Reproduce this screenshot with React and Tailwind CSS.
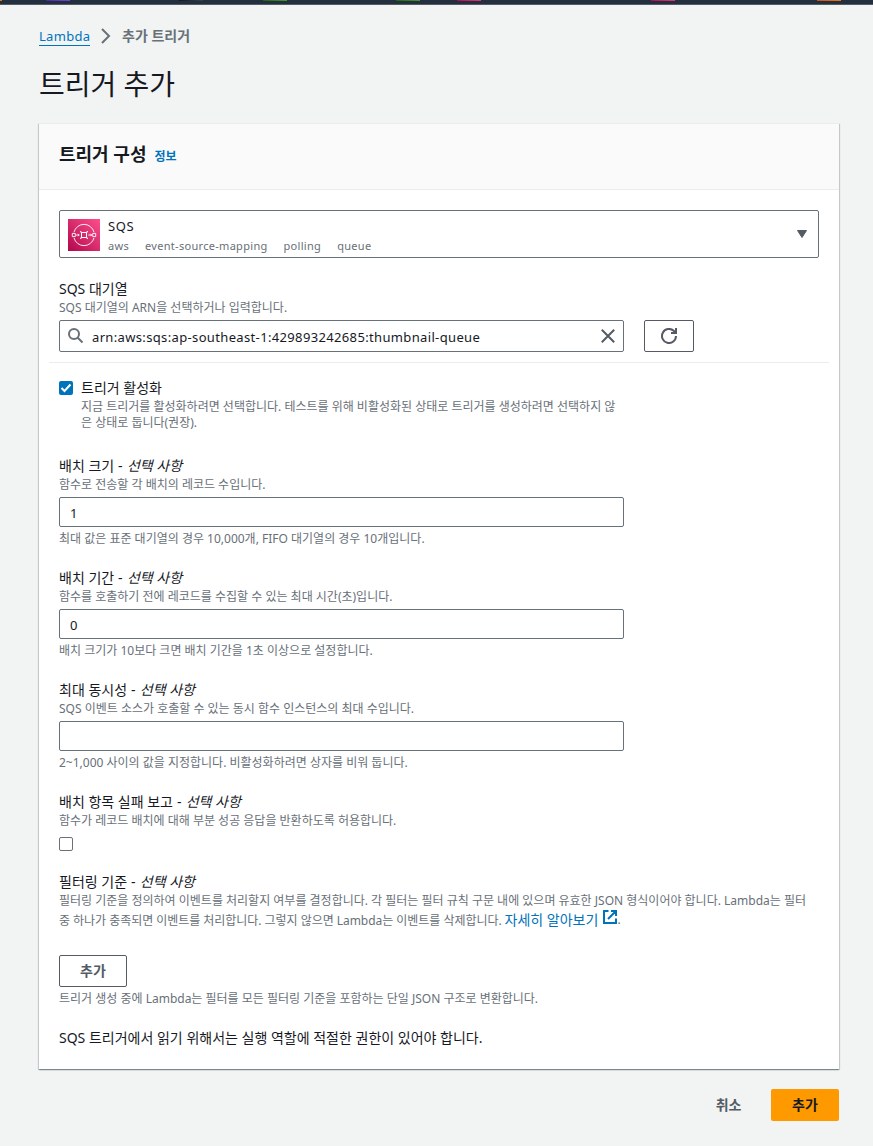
import React from "react";

function Label({ children, optional }) {
  return (
    <div className="h-[21px] whitespace-nowrap text-[14px] leading-[21px] text-[#16191f]">
      {children}
      {optional && (
        <>
          <span className="tracking-[0.3px]">{" - "}</span>
          <i>선택 사항</i>
        </>
      )}
    </div>
  );
}

function Hint({ children }) {
  return <div className="h-4 whitespace-nowrap text-[12px] leading-4 text-[#687078]">{children}</div>;
}

function Field({ label, desc, value, hint }) {
  return (
    <div className="mb-5 w-[565px]">
      <Label optional>{label}</Label>
      <div className="pt-px">
        <Hint>{desc}</Hint>
      </div>
      <div className="mt-[4px] mb-[4px] flex h-[30px] items-center rounded-[2px] border border-[#687078] px-[10px] pt-[4px] text-[13px] text-[#16191f]">
        {value}
      </div>
      <Hint>{hint}</Hint>
    </div>
  );
}

function SqsIcon() {
  return (
    <svg width="32" height="32" viewBox="0 0 32 32" fill="none" stroke="#fff">
      <defs>
        <linearGradient id="sqs" x1="0" y1="32" x2="32" y2="0" gradientUnits="userSpaceOnUse">
          <stop stopColor="#b0084d" />
          <stop offset="1" stopColor="#ff4f8b" />
        </linearGradient>
      </defs>
      <path d="M0 0h32v32H0z" fill="url(#sqs)" stroke="none" />
      <path d="M6 13.2a10.3 10.3 0 0 1 20 0M6 18.8a10.3 10.3 0 0 0 20 0" strokeWidth=".9" />
      <path d="M4.3 14.4h3v3.2h-3zM24.7 14.4h3v3.2h-3z" strokeWidth=".9" />
      <path d="M13.5 13.5h5v5h-5zM12 12.500l1.500 1M12.500 12l1 1.500M20 12.500l-1.500 1M19.500 12l-1 1.500M12 19.500l1.500-1M12.500 20l1-1.500M20 19.500l-1.500-1M19.500 20l-1-1.500" strokeWidth="1" />
      <path d="M8 16h3.200M20.300 16h3.400M10 14.800l1.200 1.200-1.200 1.200M22.500 14.800l1.200 1.200-1.200 1.200" strokeWidth=".9" />
    </svg>
  );
}

export default function App() {
  return (
    <div className="flex h-[1146px] w-[873px] flex-col overflow-hidden bg-[#f2f3f3] font-['Noto_Sans','Noto_Sans_CJK_KR',sans-serif] text-[#16191f]">
      <div className="flex h-[5px] shrink-0 border-b border-[#545b64] bg-[#232f3e]">
        <div className="h-px w-[2px] bg-[#ec7211]" />
        <div className="ml-[44px] h-px w-6 bg-linear-to-r from-[#4d27a8] to-[#7545d5]" />
        <div className="ml-[109px] h-px w-6 bg-linear-to-r from-[#17191f] to-[#3b4048]" />
        <div className="ml-[60px] h-px w-6 bg-linear-to-r from-[#1b660f] to-[#4a952c]" />
        <div className="ml-[109px] h-px w-6 bg-linear-to-r from-[#1b660f] to-[#4a952c]" />
        <div className="ml-[37px] h-px w-6 bg-linear-to-r from-[#b0084d] to-[#d93a74]" />
        <div className="ml-[170px] h-px w-6 bg-linear-to-r from-[#b0084d] to-[#d93a74]" />
        <div className="ml-[142px] h-px w-6 bg-linear-to-r from-[#c8511b] to-[#e8780f]" />
      </div>

      <nav className="mt-[21px] ml-[39px] flex h-[20px] shrink-0 items-center text-[14px] leading-[20px]">
        <a className="h-[20px] w-[51px] whitespace-nowrap border-b border-[#0073bb] text-[13px] leading-[20px] tracking-[0.3px] text-[#0073bb]">Lambda</a>
        <svg className="ml-[10px] mr-[10px]" width="12" height="18" viewBox="0 0 12 18" fill="none" stroke="#687078" strokeWidth="2">
          <path d="M2 2l7 7-7 7" />
        </svg>
        <span className="font-bold text-[#687078]">추가 트리거</span>
      </nav>

      <h1 className="mt-[20px] ml-[39px] h-[36px] shrink-0 text-[28px] leading-[36px]">트리거 추가</h1>

      <section className="mt-[21px] ml-[39px] flex h-[946px] w-[800px] shrink-0 flex-col border-t border-[#eaeded] bg-white shadow-[0_1px_1px_0_rgba(0,28,36,0.3),1px_1px_1px_0_rgba(0,28,36,0.15),-1px_1px_1px_0_rgba(0,28,36,0.15)]">
        <header className="flex h-[66px] shrink-0 items-center border-b border-[#eaeded] bg-[#fafafa] px-5 pb-[5px]">
          <h2 className="text-[18px] leading-[22px] font-bold">트리거 구성</h2>
          <a className="ml-[8px] mt-[5px] text-[12px] leading-4 font-bold text-[#0073bb]">정보</a>
        </header>

        <div className="flex flex-col px-5 pt-5">
          <div className="flex h-[48px] items-center rounded-[2px] border border-[#687078] pl-2 pr-[11px]">
            <div className="mt-[2px]">
              <SqsIcon />
            </div>
            <div className="mt-px ml-2 flex-1">
              <div className="h-5 text-[13px] leading-[19px] tracking-[0.6px]">SQS</div>
              <div className="flex h-4 gap-4 text-[11px] leading-[17px] tracking-[0.3px] text-[#687078]">
                <span>aws</span>
                <span>event-source-mapping</span>
                <span>polling</span>
                <span>queue</span>
              </div>
            </div>
            <svg width="10" height="8" viewBox="0 0 10 8" fill="#545b64" stroke="#545b64" strokeLinejoin="round">
              <path d="M.5.5h9L5 7.5z" />
            </svg>
          </div>

          <div className="mt-5">
            <Label>SQS 대기열</Label>
            <div className="pt-px">
              <Hint>SQS 대기열의 ARN을 선택하거나 입력합니다.</Hint>
            </div>
            <div className="mt-[4px] flex gap-5">
              <div className="flex h-8 w-[565px] items-center rounded-[2px] border border-[#687078] px-2">
                <svg width="16" height="16" viewBox="0 0 16 16" fill="none" stroke="#687078" strokeWidth="2">
                  <circle cx="6" cy="6" r="5" />
                  <path d="M9.500 9.500l5 5" />
                </svg>
                <span className="mt-[2px] ml-2 flex-1 text-[13px] leading-[20px] tracking-[0.35px]">arn:aws:sqs:ap-southeast-1:429893242685:thumbnail-queue</span>
                <svg width="14" height="14" viewBox="0 0 14 14" fill="none" stroke="#545b64" strokeWidth="2">
                  <path d="M.8.8l12.4 12.4M13.2.8L.8 13.2" />
                </svg>
              </div>
              <div className="flex h-8 w-[50px] items-center justify-center rounded-[2px] border border-[#545b64]">
                <svg width="16" height="16" viewBox="0 0 16 16" fill="none" stroke="#545b64" strokeWidth="2">
                  <path d="M15 8a7 7 0 1 1-2.3-5.2L15 5" />
                  <path d="M15 0v5h-5" />
                </svg>
              </div>
            </div>
          </div>

          <div className="-mx-[10px] mt-[10px] h-px bg-[#eaeded]" />

          <div className="mt-[15px] flex h-[53px]">
            <div className="mt-[3px] flex h-[14px] w-[14px] items-center justify-center rounded-[2px] bg-[#0073bb]">
              <svg width="14" height="14" viewBox="0 0 14 14" fill="none" stroke="#fff" strokeWidth="2">
                <path d="M2.500 7l3 3 6-6.500" />
              </svg>
            </div>
            <div className="ml-2">
              <div className="h-[21px] text-[14px] leading-[20px]">트리거 활성화</div>
              <Hint>지금 트리거를 활성화하려면 선택합니다. 테스트를 위해 비활성화된 상태로 트리거를 생성하려면 선택하지 않</Hint>
              <Hint>은 상태로 둡니다(권장).</Hint>
            </div>
          </div>

          <div className="mt-[24px]">
            <Field label="배치 크기" desc="함수로 전송할 각 배치의 레코드 수입니다." value="1" hint="최대 값은 표준 대기열의 경우 10,000개, FIFO 대기열의 경우 10개입니다." />
            <Field label="배치 기간" desc="함수를 호출하기 전에 레코드를 수집할 수 있는 최대 시간(초)입니다." value="0" hint="배치 크기가 10보다 크면 배치 기간을 1초 이상으로 설정합니다." />
            <Field label="최대 동시성" desc="SQS 이벤트 소스가 호출할 수 있는 동시 함수 인스턴스의 최대 수입니다." value="" hint="2~1,000 사이의 값을 지정합니다. 비활성화하려면 상자를 비워 둡니다." />
          </div>

          <div>
            <Label optional>배치 항목 실패 보고</Label>
            <div className="pt-px">
              <Hint>함수가 레코드 배치에 대해 부분 성공 응답을 반환하도록 허용합니다.</Hint>
            </div>
            <div className="mt-[8px] h-[14px] w-[14px] rounded-[2px] border border-[#687078]" />
          </div>

          <div className="mt-[20px]">
            <Label optional>필터링 기준</Label>
            <div className="pt-px">
              <Hint>필터링 기준을 정의하여 이벤트를 처리할지 여부를 결정합니다. 각 필터는 필터 규칙 구문 내에 있으며 유효한 JSON 형식이어야 합니다. Lambda는 필터</Hint>
            </div>
            <div className="flex h-[22px] items-center whitespace-nowrap text-[12px] leading-[22px] text-[#687078]">
              <span className="pt-px tracking-[-0.04px]">중 하나가 충족되면 이벤트를 처리합니다. 그렇지 않으면 Lambda는 이벤트를 삭제합니다.</span>
              <a className="ml-[3px] text-[14px] text-[#0073bb]">자세히 알아보기</a>
              <svg className="mb-[6px] ml-[5px]" width="14" height="14" viewBox="0 0 14 14" fill="none" stroke="#0073bb" strokeWidth="2">
                <path d="M5.5 1H1v12h12V8.500M8 1h5v5M13 1L5 9" />
              </svg>
              <span>.</span>
            </div>
          </div>

          <button className="mt-[24px] h-8 w-[68px] rounded-[2px] border border-[#545b64] pb-px text-[14px] font-bold text-[#545b64]">추가</button>
          <div className="mt-[4px]">
            <Hint>트리거 생성 중에 Lambda는 필터를 모든 필터링 기준을 포함하는 단일 JSON 구조로 변환합니다.</Hint>
          </div>
          <div className="mt-[20px]">
            <Label>SQS 트리거에서 읽기 위해서는 실행 역할에 적절한 권한이 있어야 합니다.</Label>
          </div>
        </div>
      </section>

      <footer className="mt-[20px] mr-[34px] flex h-8 shrink-0 items-center justify-end text-[14px] font-bold">
        <button className="mr-[29.5px] pb-[2px] text-[#545b64]">취소</button>
        <button className="h-8 w-[68px] rounded-[2px] bg-[#ff9900] pb-[2px]">추가</button>
      </footer>
    </div>
  );
}
